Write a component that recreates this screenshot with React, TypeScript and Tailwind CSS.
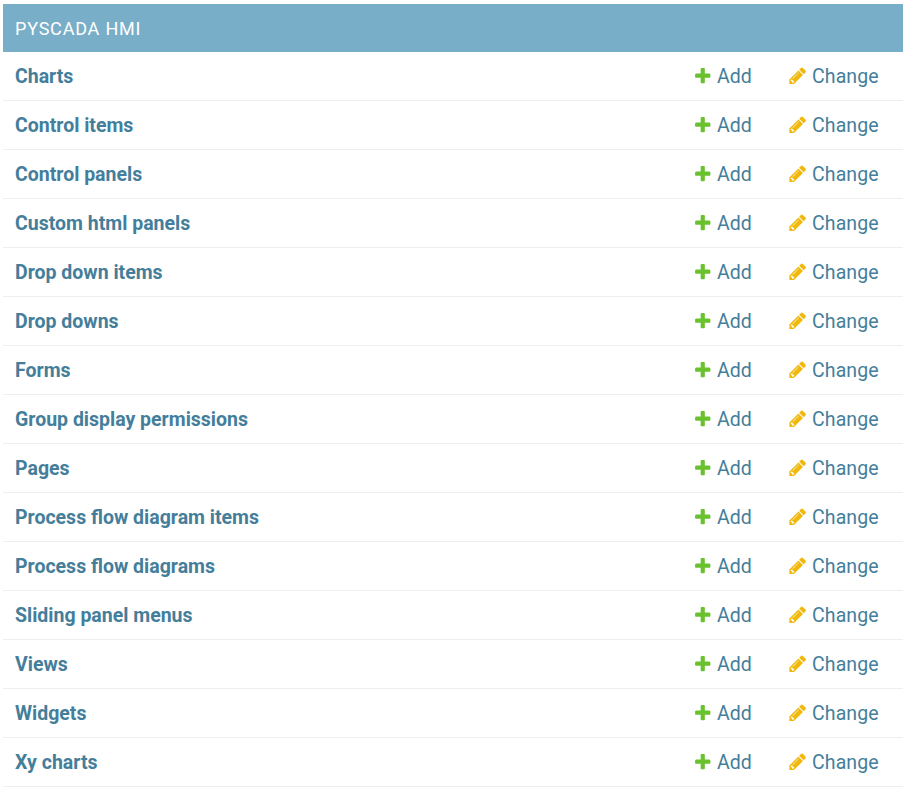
const rows: string[] = [
  "Charts",
  "Control items",
  "Control panels",
  "Custom html panels",
  "Drop down items",
  "Drop downs",
  "Forms",
  "Group display permissions",
  "Pages",
  "Process flow diagram items",
  "Process flow diagrams",
  "Sliding panel menus",
  "Views",
  "Widgets",
  "Xy charts",
];

function AddIcon() {
  return (
    <svg className="mb-px h-[19.5px] w-[19.5px] shrink-0" viewBox="0 0 1792 1792" fill="#6ac12e">
      <path d="M1600 796v192q0 40-28 68t-68 28h-416v416q0 40-28 68t-68 28h-192q-40 0-68-28t-28-68v-416h-416q-40 0-68-28t-28-68v-192q0-40 28-68t68-28h416v-416q0-40 28-68t68-28h192q40 0 68 28t28 68v416h416q40 0 68 28t28 68z" />
    </svg>
  );
}

function ChangeIcon() {
  return (
    <svg className="mb-px h-[19.5px] w-[19.5px] shrink-0" viewBox="0 0 1792 1792" fill="#efb80b">
      <path d="M491 1536l91-91-235-235-91 91v107h128v128h107zm523-928q0-22-22-22-10 0-17 7l-542 542q-7 7-7 17 0 22 22 22 10 0 17-7l542-542q7-7 7-17zm-54-192l416 416-832 832h-416v-416zm683 96q0 53-37 90l-166 166-416-416 166-165q36-38 90-38 53 0 91 38l235 234q37 39 37 91z" />
    </svg>
  );
}

export default function App() {
  return (
    <div className="min-h-[798px] bg-white pt-1 pl-[3px] font-['Roboto',sans-serif] text-[#447e9b]">
      <div className="w-[900px]">
        <div className="flex h-12 items-center bg-[#79aec8] px-3 text-[18px] tracking-[0.8px] text-white uppercase">
          Pyscada HMI
        </div>
        {rows.map((name) => (
          <div key={name} className="flex h-[49px] items-center border-b border-[#eeeeee] px-3 text-[19.5px] leading-[30px]">
            <div className="flex-1 pt-0.5 font-bold">{name}</div>
            <div className="flex w-[95px] items-center gap-[4.5px]">
              <AddIcon />
              <span className="pt-0.5">Add</span>
            </div>
            <div className="flex w-[103px] items-center gap-[4.5px]">
              <ChangeIcon />
              <span className="pt-0.5 tracking-[0.1px]">Change</span>
            </div>
          </div>
        ))}
      </div>
    </div>
  );
}
